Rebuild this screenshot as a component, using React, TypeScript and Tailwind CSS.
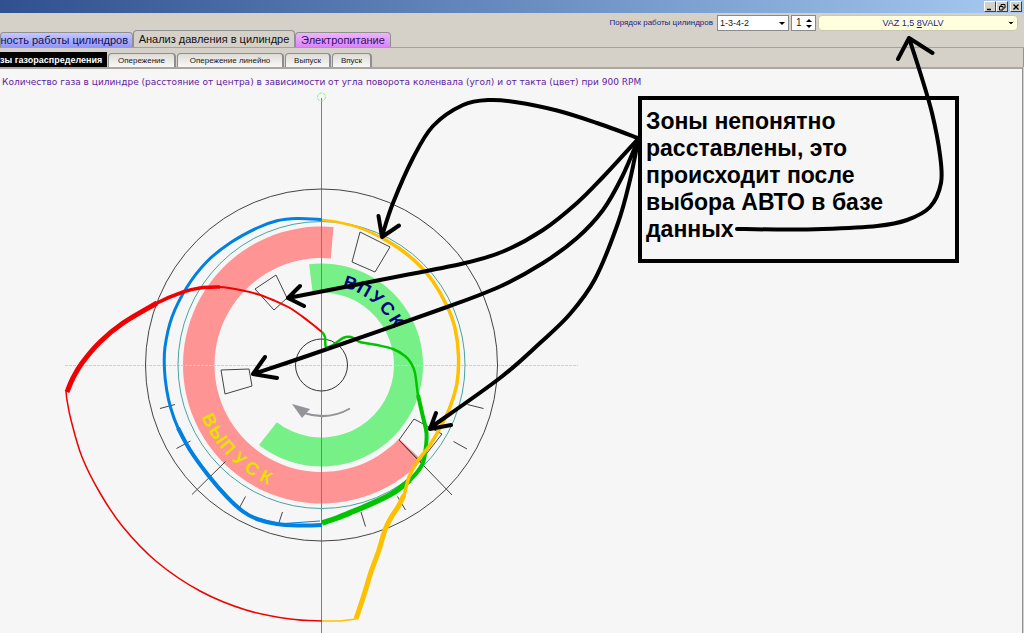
import { ChevronDown } from "lucide-react";

type Point = [number, number];

const CX = 321.5;
const CY = 365;

const mainTabs = [
  {
    label: "ность работы цилиндров",
    style: "h-[15px] w-[133px] justify-end bg-linear-to-b from-[#c4c8ff] to-[#9496fa] pr-1 text-[#101050]",
  },
  {
    label: "Анализ давления в цилиндре",
    style: "h-[17px] w-[162px] justify-center bg-[#d5d1c9] text-[#101010]",
  },
  {
    label: "Электропитание",
    style: "h-[15px] w-[96px] justify-center bg-linear-to-b from-[#efb4fc] to-[#dc84f8] text-[#301060]",
  },
];

const subTabs = [
  { label: "Опережение", width: "w-[68px]" },
  { label: "Опережение линейно", width: "w-[107px]" },
  { label: "Выпуск", width: "w-[46px]" },
  { label: "Впуск", width: "w-[40px]" },
];

// Smooth line through all points (Catmull-Rom converted to beziers)
const smooth = (pts: Point[]) => {
  let d = `M${pts[0][0]} ${pts[0][1]}`;
  for (let i = 0; i < pts.length - 1; i++) {
    const p0 = pts[i - 1] ?? pts[i];
    const p1 = pts[i];
    const p2 = pts[i + 1];
    const p3 = pts[i + 2] ?? p2;
    d += `C${p1[0] + (p2[0] - p0[0]) / 6} ${p1[1] + (p2[1] - p0[1]) / 6} ${p2[0] - (p3[0] - p1[0]) / 6} ${p2[1] - (p3[1] - p1[1]) / 6} ${p2[0]} ${p2[1]}`;
  }
  return d;
};

// Angles are in degrees, clockwise from the top
const polar = (r: number, deg: number): Point => {
  const a = (deg * Math.PI) / 180;
  return [CX + r * Math.sin(a), CY - r * Math.cos(a)];
};

const sector = (rIn: number, rOut: number, from: number, to: number) => {
  const large = to - from > 180 ? 1 : 0;
  return `M${polar(rOut, from)}A${rOut} ${rOut} 0 ${large} 1 ${polar(rOut, to)}L${polar(rIn, to)}A${rIn} ${rIn} 0 ${large} 0 ${polar(rIn, from)}Z`;
};

const blueTrace: Point[] = [
  [322, 219.5], [297, 218.5], [277, 220.7], [257, 228], [230, 243], [207, 261.5],
  [187, 287], [172, 317], [165, 347], [164.5, 370], [166.7, 390], [170.7, 408],
  [178, 428], [190, 450], [208, 475], [227, 497], [243, 511.5], [257, 519],
  [277, 524], [297, 525.5], [322, 525],
];

const blueThick: Point[] = blueTrace.slice(12);

const redThick: Point[] = [[67, 392], [73, 378], [82, 363], [100, 342], [123, 323], [157, 303]];
const redMedium: Point[] = [[123, 323], [157, 303], [183, 292], [200, 288], [220, 287]];
const redLight: Point[] = [
  [200, 288], [220, 287], [240, 290], [257, 294], [273, 300], [290, 308], [307, 320], [322, 332],
];
const redThin: Point[] = [
  [66, 391], [67, 400], [71, 420], [82, 457], [100, 493], [123, 527], [157, 562],
  [200, 591], [246, 610], [290, 619], [322, 621],
];

const yellowThick: Point[] = [
  [356, 619], [364, 595], [371, 572], [379, 550], [385, 530], [392, 516], [398, 507], [404, 495],
];
const yellowTrace: Point[] = [
  [398, 507], [404, 495], [409, 477], [417, 462], [430, 445], [440, 428], [450, 407], [457, 383],
  [458.5, 356], [455, 328], [447, 306], [433, 281.5], [417, 263], [400, 249], [382, 238],
];
const yellowLight: Point[] = [[400, 249], [382, 238], [360, 228], [337, 222], [322, 220]];

const greenTrace: Point[] = [
  [322, 332], [325, 337], [326, 347], [333, 345], [343, 338], [351, 337], [360, 342], [377, 345],
  [393, 349], [405, 356], [411, 363], [415, 373], [418, 395], [423, 417],
];
const greenMedium: Point[] = [[418, 395], [423, 417], [426.5, 433], [425.5, 450], [422, 465], [410, 480], [393, 493]];
const greenThick: Point[] = [[410, 480], [393, 493], [373, 503], [353, 511.5], [337, 518], [322, 523]];

const ticks = [
  "M160 408.5L175 404.5", "M176.5 448.5L190.5 441", "M192 494.5L225.5 461.5",
  "M238.5 509.5L245.5 496.5", "M279 522.5L282.5 512", "M361 512L365.5 526.5",
  "M397.5 496.5L405.5 510", "M399 440L452 495", "M453.5 441.5L467 449", "M467.5 404.5L483.5 408.5",
];

const zones = [
  "360,232 390,247 375,272 352,262",
  "255,289 276,275 287,298 274,310",
  "221,370 249,369 252,386 225,394",
  "414,419 442,434 420,462 399,440",
];

const arrows: { line: Point[]; head: string }[] = [
  {
    line: [[638, 138], [597, 123], [557, 110.5], [515, 102], [490, 100], [463, 105], [433, 126], [413, 158], [393, 203], [382, 236]],
    head: "M378.5 216L382 237L399 225.5",
  },
  {
    line: [[638, 139], [603, 177], [577, 203], [543, 230], [503, 251.5], [463, 263.5], [380, 280], [288, 298]],
    head: "M300 286L288 298L304 306",
  },
  {
    line: [[638, 140], [622, 177], [603, 210], [577, 238], [543, 263], [500, 286.5], [447, 307], [310, 355], [253, 374]],
    head: "M265 357L253 374L277 378",
  },
  {
    line: [[638, 141], [630, 180], [618, 223], [595, 279], [570, 314], [540, 343], [500, 378], [430, 428]],
    head: "M436 413L430 429L451 425",
  },
  {
    line: [[737, 229], [780, 229.5], [823, 229], [877, 226], [907, 220], [930, 207], [941, 183], [940, 155], [932, 113], [920, 72], [909, 38]],
    head: "M898 59L909 38L932.5 53",
  },
];

// Half of each glyph's advance, to centre it on its angle
const halfWidths: Record<string, number> = { В: 6, Ы: 8, П: 6, У: 5, С: 6, К: 5 };

type ArcWordProps = {
  word: string;
  radius: number;
  start: number;
  step: number;
  fill: string;
  inward?: boolean;
};

const ArcWord = ({ word, radius, start, step, fill, inward }: ArcWordProps) => {
  const letters = word.split("");
  const angles = letters.map((_, i) => start + i * step);
  const spots = letters.map((letter, i) => {
    const half = (halfWidths[letter] / radius) * (180 / Math.PI);
    return polar(radius, inward ? angles[i] + half : angles[i] - half);
  });
  return (
    <text
      x={spots.map((p) => p[0]).join(" ")}
      y={spots.map((p) => p[1]).join(" ")}
      rotate={angles.map((a) => (inward ? a + 180 : a)).join(" ")}
      fill={fill}
      className="font-['Liberation_Sans',sans-serif] text-[18px] font-bold"
    >
      {word}
    </text>
  );
};

const TitleBar = () => (
  <div className="flex h-[13px] items-center justify-end bg-linear-to-r from-[#30508f] to-[#a6caf0] pr-0.5">
    {["min", "restore", "close"].map((kind) => (
      <button
        key={kind}
        aria-label={kind}
        className="flex h-[11px] w-[12px] items-center justify-center border border-t-white border-r-[#404040] border-b-[#404040] border-l-white bg-[#d5d1c9] last:ml-0.5"
      >
        <svg viewBox="0 0 8 8" className="h-2 w-2 shrink-0" fill="none" stroke="#000">
          {kind === "min" && <path d="M1 6.5h4" strokeWidth="1.5" />}
          {kind === "restore" && <path d="M3 3V1.5h4v3.5H5.5M1.5 3.5h3.5v3.5h-3.5z" />}
          {kind === "close" && <path d="M1.5 1.5l5 5M6.5 1.5l-5 5" strokeWidth="1.3" />}
        </svg>
      </button>
    ))}
  </div>
);

const Toolbar = () => (
  <div className="flex h-[18px] items-end justify-end gap-0.5 pr-[6px] text-[9px] text-[#1c1c80]">
    <label htmlFor="order" className="mr-0.5 text-[8px] leading-4">
      Порядок работы цилиндров
    </label>
    <div className="relative">
      <select
        id="order"
        className="block h-4 w-[72px] appearance-none border border-[#8a8a8a] bg-white pl-0.5 text-[9px] leading-3 text-[#202020]"
      >
        <option>1-3-4-2</option>
      </select>
      <span className="pointer-events-none absolute top-[7px] right-1 border-x-[3px] border-t-[3px] border-x-transparent border-t-black" />
    </div>
    <div className="flex h-4 w-[25px] items-center border border-[#8a8a8a] bg-white">
      <input
        aria-label="Номер цилиндра"
        defaultValue="1"
        className="w-[14px] pl-1 text-[10px] leading-3 text-[#202020]"
      />
      <div className="flex flex-col gap-[3px]">
        <button aria-label="Больше" className="border-x-[3px] border-b-[3px] border-x-transparent border-b-black" />
        <button aria-label="Меньше" className="border-x-[3px] border-t-[3px] border-x-transparent border-t-black" />
      </div>
    </div>
    <button className="flex h-4 w-[200px] items-center rounded-sm border border-[#c8c8b0] bg-[#ffffde] pr-0.5 text-[9px] leading-3">
      <span className="grow text-center">
        VAZ 1,5 <u>8</u>VALV
      </span>
      <ChevronDown className="h-2 w-2 fill-black text-black" />
    </button>
  </div>
);

const Chart = () => (
  <svg viewBox="0 92 640 541" className="block h-[541px] w-[640px]" fill="none">
    <path d={sector(107, 138.5, 133.5, 365)} fill="#ff9494" />
    <path d={sector(72.5, 101.5, -7, 218)} fill="#78f088" />
    <path d="M65 365.5H578" stroke="#cfcfcf" strokeDasharray="3 1" />
    <path d="M321.5 98V633" stroke="#5c9460" />
    <circle cx="321.5" cy="97" r="4" stroke="#80f090" strokeDasharray="3 1" />
    <circle cx={CX} cy={CY} r="176" stroke="#444" />
    <circle cx={CX} cy={CY} r="143.5" stroke="#4aa3a3" />
    <circle cx={CX} cy={CY} r="26" stroke="#333" />
    {zones.map((points) => (
      <polygon key={points} points={points} stroke="#444" />
    ))}
    <path d={ticks.join("")} stroke="#444" />

    <ArcWord word="ВПУСК" radius={81} start={19} step={10} fill="#000080" />
    <ArcWord word="ВЫПУСК" radius={131} start={244} step={-7.5} fill="#e8e000" inward />

    <path d="M350 408.5Q328 421 304 413" stroke="#949498" strokeWidth="2" />
    <path d="M292 404L310 409L302 418Z" fill="#949498" />

    <g stroke="#0080e0">
      <path d={smooth(blueTrace)} strokeWidth="3" />
      <path d={smooth(blueThick)} strokeWidth="4" />
      <path d="M284 523.5L320 521" strokeWidth="1" />
    </g>
    <g stroke="#00c400">
      <path d={smooth(greenTrace)} strokeWidth="2.5" />
      <path d={smooth(greenMedium)} strokeWidth="4" />
      <path d={smooth(greenThick)} strokeWidth="5.5" />
    </g>
    <g stroke="#f00000">
      <path d={smooth(redThin)} strokeWidth="1.5" />
      <path d={smooth(redThick)} strokeWidth="5" />
      <path d={smooth(redMedium)} strokeWidth="3.5" />
      <path d={smooth(redLight)} strokeWidth="2" />
    </g>
    <g stroke="#ffc000">
      <path d="M322 621L340 621L356 619" strokeWidth="1.5" />
      <path d={smooth(yellowThick)} strokeWidth="5" />
      <path d={smooth(yellowTrace)} strokeWidth="3.5" />
      <path d={smooth(yellowLight)} strokeWidth="2.5" />
    </g>
  </svg>
);

const Annotations = () => (
  <>
    <div className="absolute top-24 left-[638px] h-[167px] w-[321px] border-4 border-black pt-[8px] pl-1 text-[23px] leading-[27px] font-bold text-black">
      Зоны непонятно
      <br />
      расставлены, это
      <br />
      происходит после
      <br />
      выбора АВТО в базе
      <br />
      данных
    </div>
    <svg
      viewBox="0 0 1024 633"
      className="pointer-events-none absolute top-0 left-0 h-[633px] w-[1024px]"
      fill="none"
      stroke="#000"
      strokeWidth="4"
      strokeLinecap="round"
      strokeLinejoin="round"
    >
      {arrows.map(({ line, head }) => (
        <path key={head} d={smooth(line) + head} />
      ))}
    </svg>
  </>
);

const App = () => {
  return (
    <div className="relative flex min-h-screen flex-col overflow-hidden bg-[#d5d1c9] font-['Liberation_Sans',sans-serif]">
      <TitleBar />
      <Toolbar />
      <nav className="flex h-[17px] items-end border-b border-[#a5a29c]">
        {mainTabs.map((tab) => (
          <button
            key={tab.label}
            className={`flex items-center overflow-hidden rounded-t-sm border border-b-0 border-[#909090] text-[11px] leading-3 whitespace-nowrap ${tab.style}`}
          >
            {tab.label}
          </button>
        ))}
      </nav>
      <nav className="flex h-[19px] items-end gap-px border-r border-[#909090]">
        <button className="h-[15px] w-[107px] overflow-hidden bg-black pr-2 text-right text-[9px] leading-3 font-bold whitespace-nowrap text-white">
          зы газораспределения
        </button>
        {subTabs.map((tab) => (
          <button
            key={tab.label}
            className={`h-[14px] rounded-t-sm border border-r-2 border-b-0 border-[#8e8e8e] bg-linear-to-b from-[#dedcd6] to-[#f8f8f8] text-[8px] leading-3 whitespace-nowrap text-[#202020] ${tab.width}`}
          >
            {tab.label}
          </button>
        ))}
      </nav>
      <main className="mr-px grow border-t-2 border-r border-t-[#aaa6a0] border-r-[#909090] bg-[#f6f6f6]">
        <h1 className="h-[23px] pt-[5px] pl-0.5 font-['DejaVu_Sans',sans-serif] text-[9px] leading-4 whitespace-nowrap text-[#6020a0]">
          Количество газа в цилиндре (расстояние от центра) в зависимости от угла поворота коленвала (угол) и от такта (цвет) при 900 RPM
        </h1>
        <Chart />
      </main>
      <Annotations />
    </div>
  );
};

export default App;
